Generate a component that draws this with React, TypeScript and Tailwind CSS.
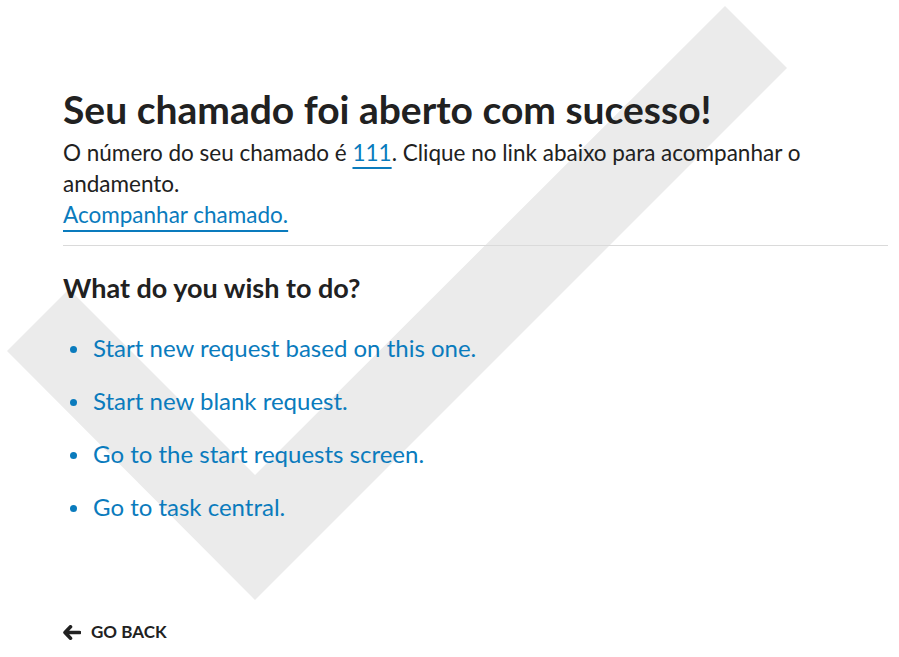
import React from "react";

export default function App() {
  const items = [
    "Start new request based on this one.",
    "Start new blank request.",
    "Go to the start requests screen.",
    "Go to task central.",
  ];
  return (
    <div
      className="relative w-[899px] h-[657px] overflow-hidden bg-white text-[#212121]"
      style={{ fontFamily: "Lato, 'Open Sans', sans-serif" }}
    >
      <svg
        className="absolute left-0 top-0 pointer-events-none"
        width="899"
        height="657"
        viewBox="0 0 899 657"
      >
        <polygon
          points="725,6 787,68 255,600 7,351 69,289 255,475"
          fill="#ebebeb"
        />
      </svg>
      <div className="relative pl-[63px] pr-[11px] pt-[85px]">
        <h1 className="text-[39px] font-bold leading-[48px]">
          Seu chamado foi aberto com sucesso!
        </h1>
        <p className="mt-[4px] text-[22.5px] leading-[31px]">
          O número do seu chamado é{" "}
          <a className="text-[#0a7bbd] underline decoration-2 decoration-[#0a7bbd] underline-offset-[6px]">111</a>. Clique no link abaixo para acompanhar o andamento.
          <br />
          <a className="text-[#0a7bbd] underline decoration-2 decoration-[#0a7bbd] underline-offset-[7px]">
            Acompanhar chamado.
          </a>
        </p>
        <div className="mt-[15px] h-[1px] bg-[#dadada]" />
        <h2 className="mt-[24px] text-[27px] font-bold leading-[36px]">
          What do you wish to do?
        </h2>
        <ul className="mt-[24px] flex flex-col gap-[17px]">
          {items.map((t) => (
            <li key={t} className="flex items-center text-[24px] leading-[36px] text-[#0a7bbd]">
              <span className="w-[7px] h-[7px] rounded-full bg-[#0a7bbd] ml-[7px] mr-[16px] mt-[2px]" />
              {t}
            </li>
          ))}
        </ul>
        <div className="mt-[95px] flex items-center gap-[10px] h-[24px]">
          <svg width="18" height="15" viewBox="0 0 18 15">
            <path
              d="M7.5 1.8 L2 7.5 L7.5 13.2 M2.5 7.5 H16.5"
              stroke="#212121"
              strokeWidth="3.6"
              fill="none"
              strokeLinecap="round"
              strokeLinejoin="round"
            />
          </svg>
          <span className="text-[17px] font-bold uppercase leading-[24px]">Go back</span>
        </div>
      </div>
    </div>
  );
}
